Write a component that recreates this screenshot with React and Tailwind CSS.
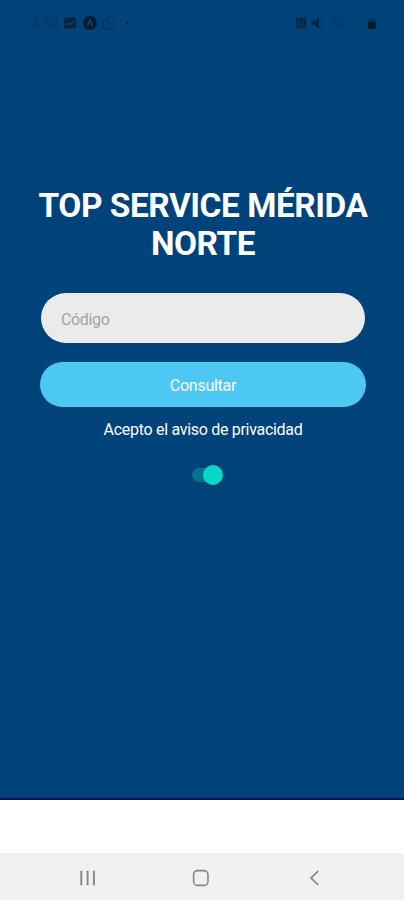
import { useState } from 'react';

function StatusBar() {
  return (
    <header className="flex h-[46px] items-center justify-between pl-[31px] pr-[28px] text-[#06263f]">
      <div className="flex items-center">
        <span className="w-[33px] text-[14px] leading-none tracking-[0.2px] text-[#0a3355]">3.50</span>
        <svg className="h-3 w-3" viewBox="0 0 12 12">
          <rect x="0" y="0.5" width="12" height="11" rx="1.5" fill="currentColor" />
          <path d="M2 8.5 4.5 6.5 6.5 7.5 10 3.5" fill="none" stroke="#0b4877" strokeWidth="1.1" />
        </svg>
        <svg className="ml-[7px] h-[14px] w-[14px]" viewBox="0 0 14 14">
          <circle cx="7" cy="7" r="7" fill="#021a2e" />
          <path d="M4.2 9.8 7 4.2 9.8 9.8" fill="none" stroke="#0b4877" strokeWidth="1.5" />
        </svg>
        <svg className="ml-[5px] h-[14px] w-[14px] opacity-60" viewBox="0 0 14 14" fill="none" stroke="currentColor">
          <path d="M1 13 1.9 10A6 6 0 1 1 4.2 12.2Z" strokeWidth="1.1" />
          <path d="M4.9 4.3c-.9 2 2.3 5.4 4.4 4.8l.4-1.2-1.4-.7-.8.7-1.6-1.7.6-.8-.6-1.3Z" strokeWidth="0.9" />
        </svg>
        <span className="ml-[10px] h-[3px] w-[3px] rounded-full bg-[#06263f]" />
      </div>

      <div className="flex items-center">
        <svg className="h-3 w-3" viewBox="0 0 12 12" fill="none" stroke="currentColor">
          <circle cx="6" cy="6.3" r="4" strokeWidth="2.4" />
          <path d="M6 4v2.5h2M.8 2.8 3 .8M11.2 2.8 9 .8M2.6 10 1.2 11.6M9.4 10l1.4 1.6" strokeWidth="1.6" />
        </svg>
        <svg className="ml-[5px] h-3 w-3" viewBox="0 0 12 12">
          <path d="M0 4h3l4-3.5v11L3 8H0Z" fill="currentColor" />
          <path d="M.8 1.5 8 11M9 3.5c1.2 1 1.2 4 0 5M10.5 1.6c1.8 2 1.8 6 .2 8" fill="none" stroke="currentColor" strokeWidth="1" opacity="0.7" />
        </svg>
        <svg className="ml-[7px] h-3 w-[13px] opacity-50" viewBox="0 0 13 12" fill="none" stroke="currentColor">
          <path d="M0 3.5C3 .5 8 .5 11 3.5M2.5 5.8c2-1.8 4.2-1.8 6 0M5.5 8.5v1" strokeWidth="1.2" />
          <path d="M8 7v4M6.7 9.8 8 11.2l1.3-1.4M11.3 11V7M10 8.2 11.3 7l1.3 1.2" strokeWidth="1" />
        </svg>
        <svg className="ml-[6px] h-3 w-[11px] opacity-20" viewBox="0 0 11 12" fill="currentColor">
          <path d="M0 10h2v2H0ZM3 7h2v5H3ZM6 4h2v8H6ZM9 1h2v11H9Z" />
        </svg>
        <svg className="ml-[7px] h-3 w-2" viewBox="0 0 8 12">
          <path d="M2.5 0h3v1.5H8V5H0V1.5h2.5Z" fill="currentColor" opacity="0.4" />
          <path d="M0 5h8v6.2a.8.8 0 0 1-.8.8H.8a.8.8 0 0 1-.8-.8Z" fill="#021a2e" />
        </svg>
      </div>
    </header>
  );
}

function Toggle({ checked, onChange }) {
  return (
    <button
      type="button"
      role="switch"
      aria-checked={checked}
      aria-label="Acepto el aviso de privacidad"
      onClick={() => onChange(!checked)}
      className="ml-[9px] mt-[25px] flex h-5 w-8 items-center"
    >
      <span className="h-[14px] w-[26px] rounded-full bg-[#04728e]" />
      <span className={`-ml-[15px] h-5 w-5 shrink-0 rounded-full bg-[#05d9c5] ${checked ? '' : '-translate-x-3'}`} />
    </button>
  );
}

function NavBar() {
  return (
    <nav className="flex h-[47px] items-center bg-[#f1f1f1] pl-[79px] pt-[3px] text-[#858585]">
      <svg className="h-4 w-[18px]" viewBox="0 0 18 16" fill="none" stroke="currentColor" strokeWidth="1.9">
        <path d="M2.3 .7v14.6M8.6 .7v14.6M14.9 .7v14.6" />
      </svg>
      <svg className="ml-[95px] h-[18px] w-[18px]" viewBox="0 0 18 18" fill="none" stroke="currentColor" strokeWidth="1.6">
        <rect x="1.6" y="1.6" width="14.4" height="14.8" rx="4" />
      </svg>
      <svg className="ml-[99px] h-4 w-[11px]" viewBox="0 0 11 16" fill="none" stroke="currentColor" strokeWidth="1.7">
        <path d="M9.2 1.2 2 8l7.2 6.8" />
      </svg>
    </nav>
  );
}

export default function App() {
  const [codigo, setCodigo] = useState('');
  const [acepto, setAcepto] = useState(true);

  return (
    <div className="flex h-[900px] w-[404px] flex-col overflow-hidden bg-white font-[Roboto,sans-serif]">
      <div className="flex h-[800px] flex-col border-b-2 border-[#001563] bg-[#00437a]">
        <StatusBar />
        <main className="flex flex-col items-center pl-[2px] pt-[141px]">
          <h1 className="w-[350px] text-center text-[33.4px] font-bold leading-[38px] tracking-[-0.45px] text-white">
            TOP SERVICE MÉRIDA NORTE
          </h1>
          <input
            value={codigo}
            onChange={(e) => setCodigo(e.target.value)}
            placeholder="Código"
            className="mt-[30px] h-[50px] w-[324px] rounded-full bg-[#ebebeb] px-5 pt-[2px] text-[16px] tracking-[-0.35px] text-gray-800 outline-none placeholder:text-[#a3a3a3]"
          />
          <button
            type="button"
            className="mt-[19px] h-[45px] w-[326px] rounded-full bg-[#4dc8f4] pt-[2px] text-[16px] tracking-[-0.25px] text-white"
          >
            Consultar
          </button>
          <p className="mt-[13px] text-[16px] leading-5 tracking-[-0.3px] text-white">Acepto el aviso de privacidad</p>
          <Toggle checked={acepto} onChange={setAcepto} />
        </main>
      </div>
      <div className="flex-1" />
      <NavBar />
    </div>
  );
}
